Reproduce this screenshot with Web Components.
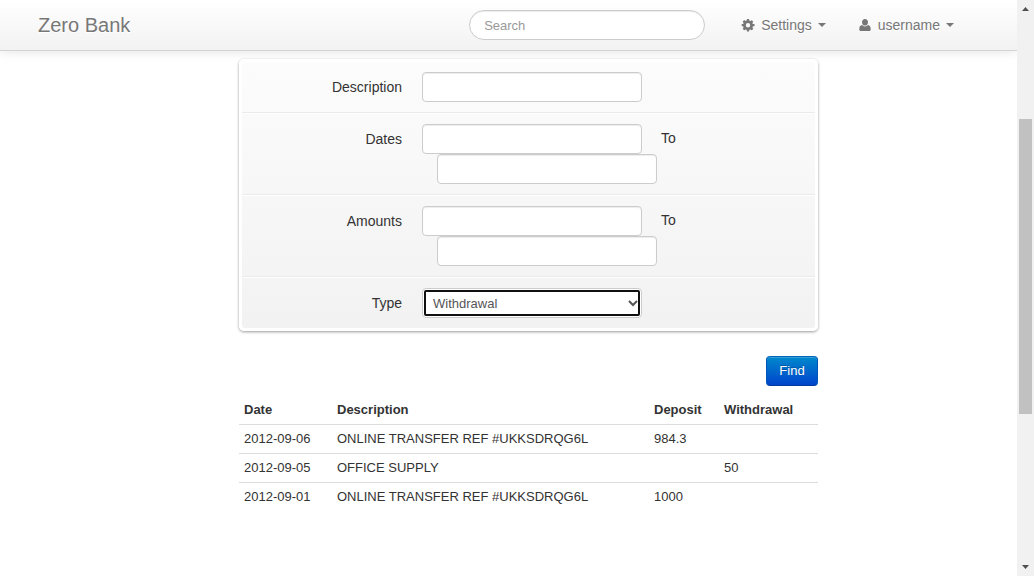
<!DOCTYPE html>
<html lang="en">
<head>
<meta charset="utf-8">
<title>Zero Bank</title>
<style>
body { margin: 0; background: #fff; color: #333; font: 14px/20px "Liberation Sans", Arial, sans-serif; }
</style>
</head>
<body>
<bank-app></bank-app>

<template id="bank-app">
  <style>
    :host { display: grid; grid-template-columns: minmax(0, 1fr) 17px; min-height: 100vh; }
    main { box-sizing: border-box; max-width: 779px; margin: 0 auto; padding: 8px 80px 0 120px; }
  </style>
  <div>
    <bank-navbar></bank-navbar>
    <main>
      <search-form></search-form>
      <transaction-table></transaction-table>
    </main>
  </div>
  <scroll-rail></scroll-rail>
</template>

<template id="bank-navbar">
  <style>
    :host { display: flex; align-items: center; height: 50px; padding: 0 63px 0 38px;
      background: linear-gradient(#fff, #f2f2f2); border-bottom: 1px solid #d4d4d4;
      box-shadow: 0 1px 10px rgba(0,0,0,.1); color: #777; }
    a { color: inherit; text-decoration: none; text-shadow: 0 1px 0 #fff; }
    .brand { font-size: 20px; margin-right: auto; }
    input { box-sizing: border-box; width: 236px; height: 30px; margin: 0 36px 0 0; padding: 4px 14px;
      border: 1px solid #ccc; border-radius: 15px; background: #fff; color: #555;
      font: 13px/20px "Liberation Sans", Arial, sans-serif; box-shadow: inset 0 1px 1px rgba(0,0,0,.075); outline: 0; }
    input::placeholder { color: #999; opacity: 1; }
    nav { display: flex; gap: 32px; }
  </style>
  <a class="brand" href="#">Zero Bank</a>
  <input type="search" placeholder="Search" aria-label="Search">
  <nav>
    <nav-menu>
      <svg slot="icon" width="14" height="14" viewBox="0 0 14 14" fill="#777"><path fill-rule="evenodd" d="M6 1h2l.4 1.700.9.400 1.500-.9 1.500 1.500-.9 1.400.4.900L13.500 6v2l-1.700.4-.4.900.9 1.500-1.500 1.500-1.500-.9-.9.400L8 13.500H6l-.4-1.700-.9-.4-1.500.9-1.500-1.500.9-1.500-.4-.9L.700 8V6l1.500-.1.4-.9-.9-1.400 1.500-1.500 1.500.9.900-.4zM7 5a2.200 2.200 0 1 0 0 4.400A2.200 2.200 0 1 0 7 5z"/></svg>
      Settings
    </nav-menu>
    <nav-menu>
      <svg slot="icon" width="14" height="14" viewBox="0 0 14 14" fill="#777"><path d="M7 1C5.200 1 4 2.300 4 4.200S5.300 7.600 7 7.600s3-1.500 3-3.400S8.800 1 7 1zM4 7C2.200 7.200 1.300 8.700 1.300 11.200 1.300 12.500 2 13 3.200 13h7.600c1.200 0 1.900-.5 1.900-1.800C12.700 8.700 11.800 7.200 10 7c-.8.9-1.800 1.400-3 1.400S4.800 7.900 4 7z"/></svg>
      username
    </nav-menu>
  </nav>
</template>

<template id="nav-menu">
  <style>
    :host { display: block; }
    a { display: flex; align-items: center; gap: 6px; color: #777; text-decoration: none; text-shadow: 0 1px 0 #fff; }
    ::slotted(svg) { display: block; }
    .caret { border: 4px solid transparent; border-top-color: #777; border-bottom: 0; }
  </style>
  <a href="#"><slot name="icon"></slot><span><slot></slot></span><span class="caret"></span></a>
</template>

<template id="search-form">
  <style>
    :host { display: block; }
    form { display: flex; flex-direction: column; align-items: flex-end; gap: 25px; }
    .panel { box-sizing: border-box; width: 100%; border: 3px solid #fff; border-radius: 5px;
      background: linear-gradient(#fcfcfc, #f2f2f2) padding-box; box-shadow: 0 1px 3px rgba(0,0,0,.4); }
    form-row + form-row { border-top: 1px solid #fff; }
    form-row:not(:last-child) { border-bottom: 1px solid #eaeaea; }
    button { width: 52px; height: 30px; padding: 0; border: 1px solid; border-color: #0067b8 #0055b8 #003a9c;
      border-radius: 4px; background: linear-gradient(#08c, #04c); color: #fff;
      font: 13px/20px "Liberation Sans", Arial, sans-serif; text-shadow: 0 -1px 0 rgba(0,0,0,.25);
      box-shadow: inset 0 1px 0 rgba(255,255,255,.2); }
  </style>
  <form>
    <div class="panel">
      <form-row label="Description"></form-row>
      <form-row label="Dates" to="To"></form-row>
      <form-row label="Amounts" to="To"></form-row>
      <form-row label="Type" option="Withdrawal"></form-row>
    </div>
    <button type="button">Find</button>
  </form>
</template>

<template id="form-row">
  <style>
    :host { display: grid; grid-template-columns: 160px minmax(0, 1fr); gap: 20px; padding: 10px 0; }
    .name { padding-top: 5px; text-align: right; }
    .fields { display: grid; grid-template-columns: 220px auto; justify-content: start; column-gap: 19px; }
    .to { padding-top: 4px; }
    input, select { box-sizing: border-box; width: 220px; height: 30px; margin: 0; border: 1px solid #ccc;
      border-radius: 4px; background-color: #fff; color: #555; font: 13px/20px "Liberation Sans", Arial, sans-serif; }
    input { padding: 4px 6px; box-shadow: inset 0 1px 1px rgba(0,0,0,.075); }
    .second { grid-column: 1 / -1; margin-left: 15px; }
    select { padding: 4px 6px; outline: 2px solid #101010; outline-offset: -4px; }
  </style>
  <label class="name" for="first"></label>
  <div class="fields"></div>
</template>

<template id="transaction-table">
  <style>
    :host { display: block; margin-top: 10px; font-size: 13px; }
    table { width: 100%; border-collapse: collapse; table-layout: fixed; }
    th, td { box-sizing: border-box; padding: 4px 5px; text-align: left; line-height: 20px; }
    td { border-top: 1px solid #ddd; }
    .date { width: 93px; }
    .deposit { width: 70px; }
    .withdrawal { width: 99px; }
  </style>
  <table>
    <thead><tr><th class="date">Date</th><th>Description</th><th class="deposit">Deposit</th><th class="withdrawal">Withdrawal</th></tr></thead>
    <tbody>
      <tr><td>2012-09-06</td><td>ONLINE TRANSFER REF #UKKSDRQG6L</td><td>984.3</td><td></td></tr>
      <tr><td>2012-09-05</td><td>OFFICE SUPPLY</td><td></td><td>50</td></tr>
      <tr><td>2012-09-01</td><td>ONLINE TRANSFER REF #UKKSDRQG6L</td><td>1000</td><td></td></tr>
    </tbody>
  </table>
</template>

<template id="scroll-rail">
  <style>
    :host { display: flex; flex-direction: column; align-items: center; background: #f1f1f1; }
    svg { display: block; flex: none; }
    .above { flex: 102; }
    .thumb { flex: 295; width: 13px; background: #c1c1c1; }
    .below { flex: 145; }
  </style>
  <svg width="17" height="17" viewBox="0 0 17 17" fill="#505050"><path d="M5 11h7L8.500 7z"/></svg>
  <div class="above"></div><div class="thumb"></div><div class="below"></div>
  <svg width="17" height="17" viewBox="0 0 17 17" fill="#505050"><path d="M5 6h7l-3.500 4z"/></svg>
</template>

<script>
class TemplateElement extends HTMLElement {
  constructor() {
    super();
    this.attachShadow({ mode: "open" }).append(
      document.getElementById(this.localName).content.cloneNode(true));
  }
}
class FormRow extends TemplateElement {
  connectedCallback() {
    const fields = this.shadowRoot.querySelector(".fields");
    this.shadowRoot.querySelector(".name").textContent = this.getAttribute("label");
    if (this.hasAttribute("option")) {
      const select = document.createElement("select");
      select.id = "first";
      select.add(new Option(this.getAttribute("option")));
      fields.replaceChildren(select);
      return;
    }
    const first = document.createElement("input");
    first.type = "text";
    first.id = "first";
    fields.replaceChildren(first);
    if (this.hasAttribute("to")) {
      const label = document.createElement("label");
      label.className = "to";
      label.htmlFor = "second";
      label.textContent = this.getAttribute("to");
      const second = document.createElement("input");
      second.type = "text";
      second.id = "second";
      second.className = "second";
      fields.append(label, second);
    }
  }
}
customElements.define("form-row", FormRow);
for (const name of ["nav-menu", "bank-navbar", "search-form", "transaction-table", "scroll-rail", "bank-app"]) {
  customElements.define(name, class extends TemplateElement {});
}
</script>
</body>
</html>
